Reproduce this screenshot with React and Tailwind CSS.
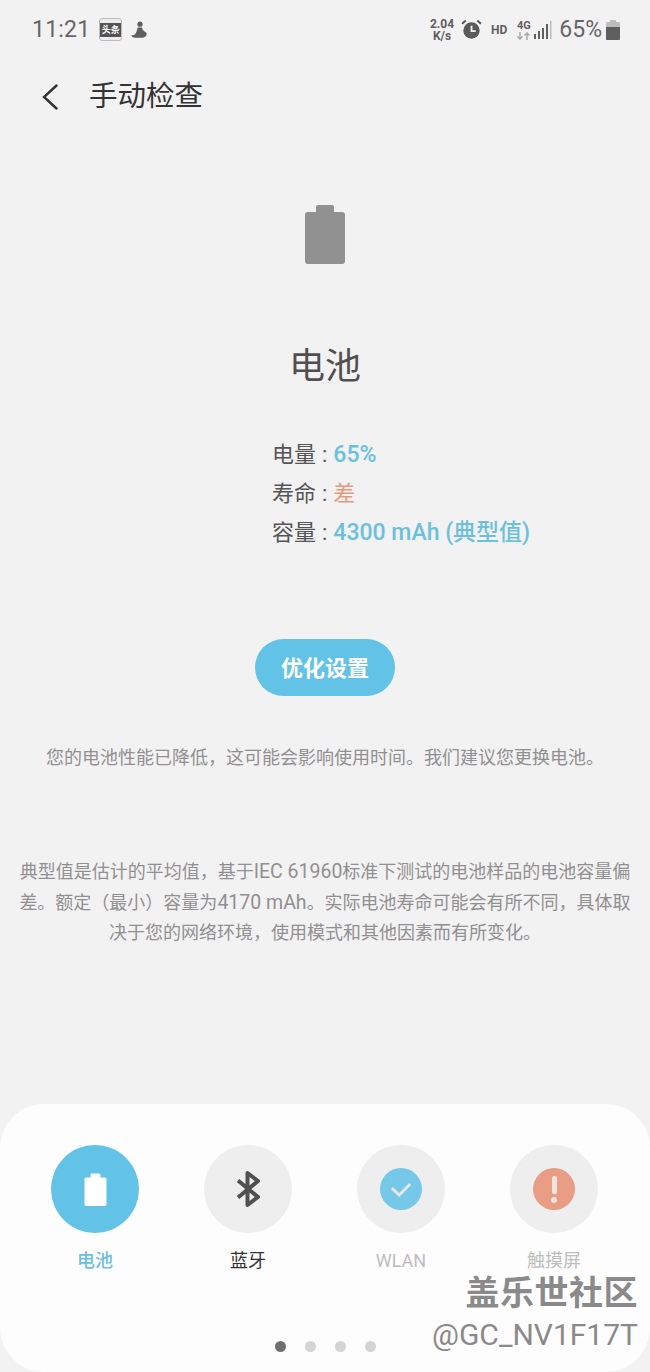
const fontStack = 'font-["Roboto","Noto_Sans_CJK_SC",sans-serif]';

function BatteryGlyph({ className }) {
    return (
        <svg viewBox="0 0 40 60" className={className} fill="currentColor">
            <path d="M11 3a2 2 0 0 1 2-2h14a2 2 0 0 1 2 2v5h8a3 3 0 0 1 3 3v46a3 3 0 0 1-3 3H3a3 3 0 0 1-3-3V11a3 3 0 0 1 3-3h8z" />
        </svg>
    );
}

function StatusBar() {
    return (
        <div className="flex h-[60px] items-center justify-between pl-[32px] pr-[30px] pb-[1px] text-[#5f5f5f]">
            <div className="flex items-center">
                <span className="text-[23px] leading-none tracking-[0.2px] text-[#666]">11:21</span>
                <div className="ml-[9px] flex h-[23px] w-[23px] flex-col justify-center rounded-[3px] border border-[#bbb] bg-[#eee]">
                    <div className="bg-[#555] text-center text-[9px] font-bold leading-[14px] text-white">头条</div>
                </div>
                {/* app notification glyph */}
                <svg viewBox="0 0 18 18" className="ml-[8px] h-[18px] w-[18px] text-[#5f5f5f]" fill="currentColor">
                    <circle cx="10" cy="3.200" r="2.600" />
                    <path d="M7.500 6.500h4.500c.4 2 1.400 3 2.600 4l1.700 1.200c1.200 1.600-.6 4.600-3.600 5.100H6C3 17 1 15.500 1.600 14c2.200.6 3.400-.3 4.400-2.200C6.600 10.400 7.200 8.500 7.500 6.500z" />
                </svg>
            </div>
            <div className="flex items-center">
                <div className="flex w-[26px] flex-col items-center text-[12px] font-bold leading-[12px]">
                    <span>2.04</span>
                    <span>K/s</span>
                </div>
                <svg viewBox="0 0 20 20" className="ml-[6px] h-[21px] w-[21px] text-[#5a5a5a]">
                    <circle cx="10" cy="11" r="7.800" fill="currentColor" />
                    <path d="M10 6.500V11.500H14" fill="none" stroke="#f2f2f2" strokeWidth="1.800" />
                    <path d="M1 4.500 4.500 1.500M19 4.500 15.500 1.500" stroke="currentColor" strokeWidth="2" />
                </svg>
                <span className="ml-[9px] text-[12px] font-bold">HD</span>
                <div className="ml-[9px] flex w-[15px] flex-col items-center">
                    <span className="text-[11px] font-bold leading-[12px]">4G</span>
                    <svg viewBox="0 0 15 8" className="h-[8px] w-[15px] text-[#aaa]" fill="none" stroke="currentColor" strokeWidth="1.500">
                        <path d="M4 0v7M1.500 4.500 4 7l2.500-2.500M11 8V1M8.500 3.500 11 1l2.500 2.500" />
                    </svg>
                </div>
                <svg viewBox="0 0 18 18" className="ml-[3px] h-[18px] w-[18px] text-[#5f5f5f]" fill="currentColor">
                    <rect x="0" y="13" width="2" height="5" />
                    <rect x="4" y="10" width="2" height="8" />
                    <rect x="8" y="7" width="2" height="11" />
                    <rect x="12" y="3" width="2" height="15" />
                    <rect x="16" y="0" width="1.500" height="18" fill="#bbb" />
                </svg>
                <span className="ml-[7px] text-[23px] leading-none text-[#666]">65%</span>
                <svg viewBox="0 0 14 20" className="ml-[4px] h-[20px] w-[14px]">
                    <path d="M4 1a1 1 0 0 1 1-1h4a1 1 0 0 1 1 1v1h3a1 1 0 0 1 1 1v16a1 1 0 0 1-1 1H1a1 1 0 0 1-1-1V3a1 1 0 0 1 1-1h3z" fill="#bdbdbd" />
                    <path d="M0 7h14v12a1 1 0 0 1-1 1H1a1 1 0 0 1-1-1z" fill="#5f5f5f" />
                </svg>
            </div>
        </div>
    );
}

function InfoRow({ label, children }) {
    return (
        <div className="flex h-[39px] items-center text-[22px] leading-[30px] text-[#555]">
            <span>{label}</span>
            <span className="ml-[6px] mr-[6px]">:</span>
            {children}
        </div>
    );
}

function TabItem({ label, labelClass, circleClass, children }) {
    return (
        <div className="flex w-[88px] flex-col items-center">
            <div className={`flex h-[88px] w-[88px] items-center justify-center rounded-full ${circleClass}`}>
                {children}
            </div>
            <span className={`mt-[15px] text-[18px] leading-[26px] ${labelClass}`}>{label}</span>
        </div>
    );
}

export default function App() {
    return (
        <div className={`relative flex h-[1372px] w-[650px] flex-col overflow-hidden bg-[#f2f2f2] ${fontStack}`}>
            <StatusBar />

            {/* Header */}
            <div className="flex h-[72px] items-center pl-[42px] pt-[2px]">
                <svg viewBox="0 0 16 26" className="h-[26px] w-[16px] text-[#333]" fill="none" stroke="currentColor" strokeWidth="2.400" strokeLinecap="round">
                    <path d="M14.500 1.500 2 13l12.500 11.500" />
                </svg>
                <h1 className="ml-[31px] text-[28.500px] font-normal text-[#333]">手动检查</h1>
            </div>

            <div className="flex flex-col items-center">
                <BatteryGlyph className="mt-[72px] h-[60px] w-[40px] text-[#919191]" />
                <h2 className="mt-[78px] text-[36px] leading-[50px] font-normal text-[#505050]">电池</h2>

                <div className="mt-[43px] flex flex-col self-start ml-[272px]">
                    <InfoRow label="电量">
                        <span className="text-[23px] font-medium text-[#6cc0dd]">65%</span>
                    </InfoRow>
                    <InfoRow label="寿命">
                        <span className="text-[#e59a80]">差</span>
                    </InfoRow>
                    <InfoRow label="容量">
                        <span className="text-[23px] font-medium text-[#6cc0dd]">4300 mAh (典型值)</span>
                    </InfoRow>
                </div>

                <button className="mt-[87px] flex h-[57px] w-[140px] items-center justify-center rounded-full bg-[#62c3e6] pt-[2px] text-[22px] font-bold text-white">
                    优化设置
                </button>

                <p className="mt-[47px] text-[18px] leading-[30px] text-[#909090]">
                    您的电池性能已降低，这可能会影响使用时间。我们建议您更换电池。
                </p>

                <p className="mt-[84px] w-[620px] text-center text-[18px] leading-[30.500px] text-[#909090]">
                    典型值是估计的平均值，基于<span className="text-[19.500px] leading-none">IEC 61960</span>标准下测试的电池样品的电池容量偏差。额定（最小）容量为<span className="text-[19.500px] leading-none">4170 mAh</span>。实际电池寿命可能会有所不同，具体取决于您的网络环境，使用模式和其他因素而有所变化。
                </p>
            </div>

            {/* Bottom tabs */}
            <div className="relative mt-auto flex h-[268px] flex-col rounded-t-[44px] rounded-b-[44px] bg-[#fdfdfd] px-[51px] pt-[41px]">
                <div className="flex gap-[65px]">
                    <TabItem label="电池" labelClass="font-medium text-[#6cc0dd]" circleClass="bg-[#62c3e6]">
                        <BatteryGlyph className="h-[33px] w-[23px] text-white" />
                    </TabItem>
                    <TabItem label="蓝牙" labelClass="text-[#333]" circleClass="bg-[#eeeeee]">
                        <svg viewBox="0 0 24 36" className="h-[36px] w-[24px] text-[#505050]" fill="none" stroke="currentColor" strokeWidth="4" strokeLinejoin="round">
                            <path d="M2 9.500 22 26 11.500 34V2L22 10 2 26.500" />
                        </svg>
                    </TabItem>
                    <TabItem label="WLAN" labelClass="text-[#bdbdbd]" circleClass="bg-[#eeeeee]">
                        <div className="flex h-[42px] w-[42px] items-center justify-center rounded-full bg-[#76c8e9]">
                            <svg viewBox="0 0 24 18" className="h-[17px] w-[22px]" fill="none" stroke="#e8e8e8" strokeWidth="3">
                                <path d="M2 7.500 10 15 22 3" />
                            </svg>
                        </div>
                    </TabItem>
                    <TabItem label="触摸屏" labelClass="text-[#bdbdbd]" circleClass="bg-[#eeeeee]">
                        <div className="flex h-[42px] w-[42px] flex-col items-center justify-center rounded-full bg-[#e99d84]">
                            <div className="h-[18px] w-[5px] rounded-[2px] bg-[#f0e4de]" />
                            <div className="mt-[3px] h-[6px] w-[6px] rounded-full bg-[#f0e4de]" />
                        </div>
                    </TabItem>
                </div>

                {/* Pager dots */}
                <div className="absolute bottom-[20px] left-0 right-0 flex justify-center gap-[19px]">
                    <span className="h-[11px] w-[11px] rounded-full bg-[#6f6f6f]" />
                    <span className="h-[11px] w-[11px] rounded-full bg-[#d4d4d4]" />
                    <span className="h-[11px] w-[11px] rounded-full bg-[#d4d4d4]" />
                    <span className="h-[11px] w-[11px] rounded-full bg-[#d4d4d4]" />
                </div>

                {/* Watermark */}
                <div className="absolute bottom-[17px] right-[12px] flex flex-col items-end text-[#8a8a8a] [text-shadow:1px_1px_0_#ffffff]">
                    <span className="text-[34px] font-bold leading-[44px] tracking-[0.5px]">盖乐世社区</span>
                    <span className="text-[30px] leading-[40px]">@GC_NV1F17T</span>
                </div>
            </div>
        </div>
    );
}
